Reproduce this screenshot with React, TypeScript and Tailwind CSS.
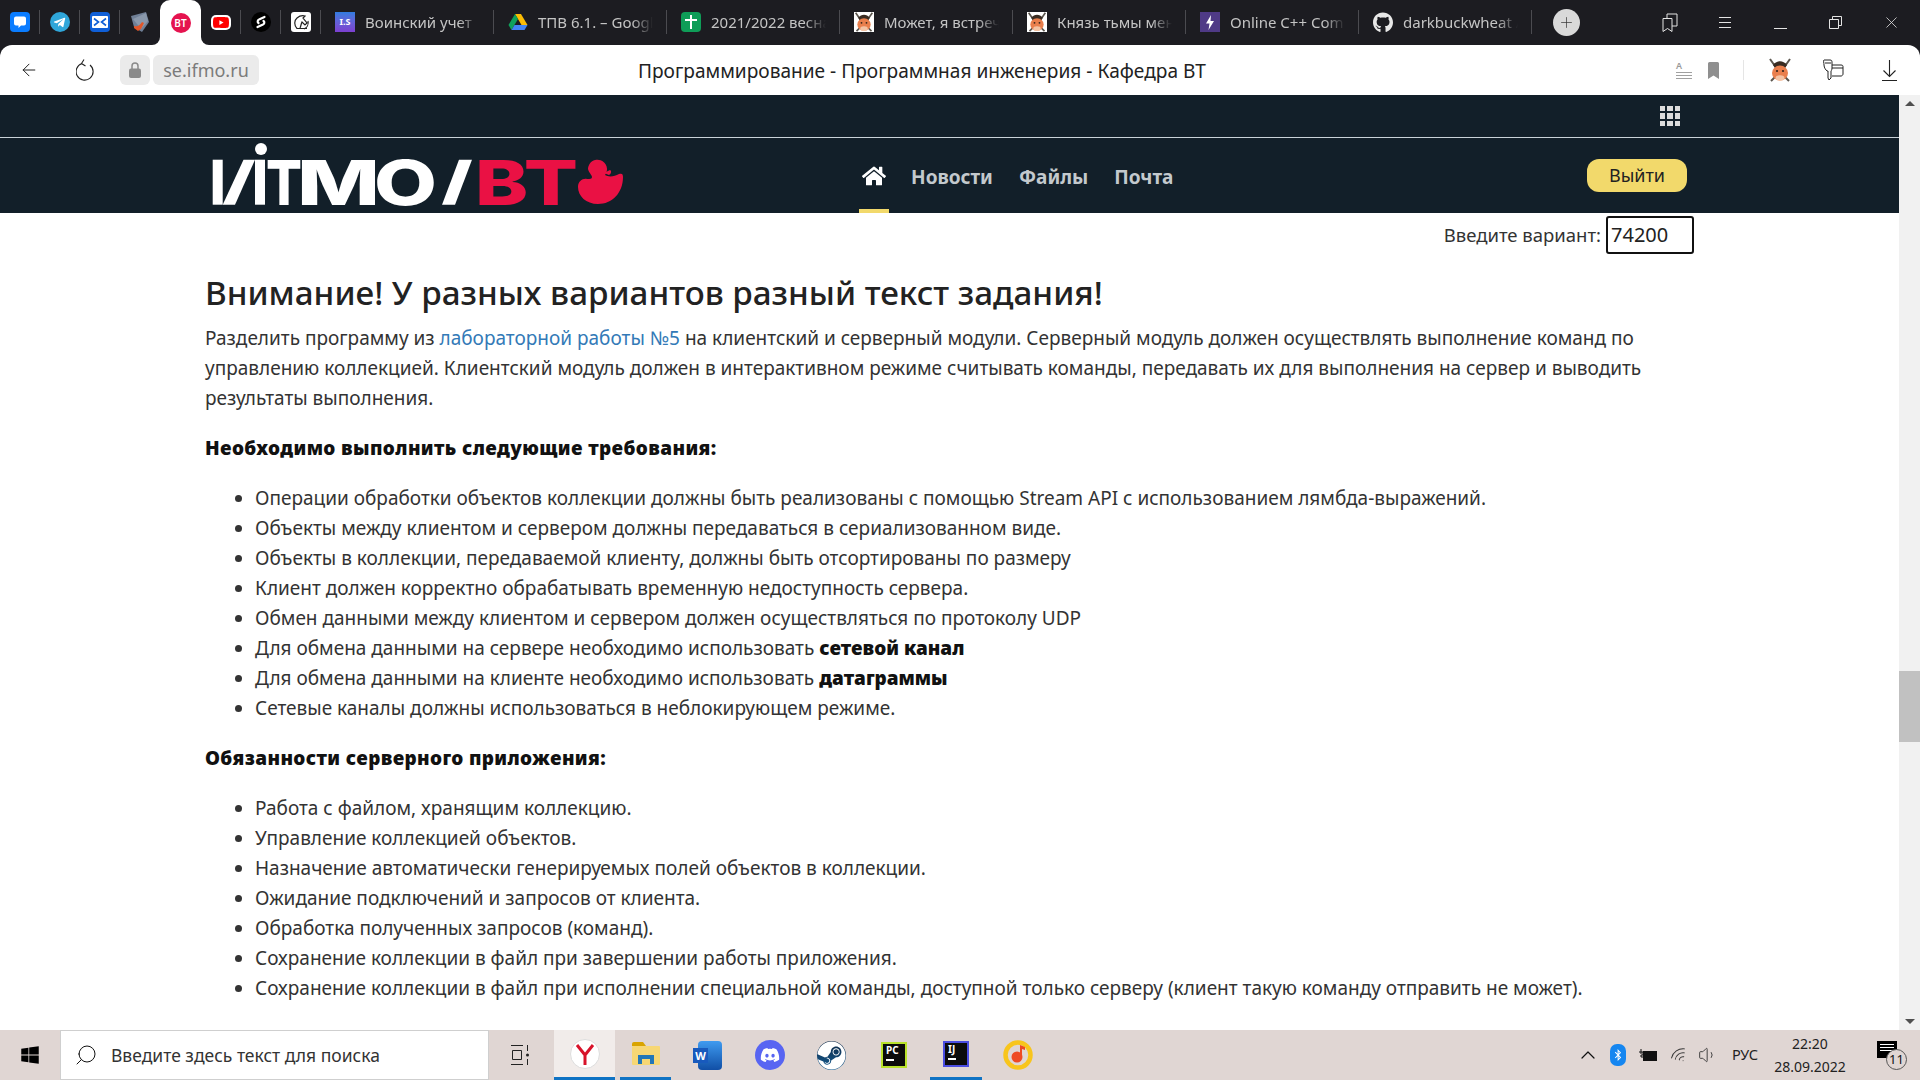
import React from "react";
import { FaGithub, FaDiscord, FaSteam, FaHome, FaYoutube, FaTelegramPlane, FaWindows, FaBluetoothB } from "react-icons/fa";
import { ArrowLeft, Search, Plus, X, ChevronUp, Volume1, Wifi } from "lucide-react";

function Sep() {
  return <div className="h-[24px] w-px bg-[#4b4b50] shrink-0" />;
}

function Pirate({ s = 20 }: { s?: number }) {
  return (
    <svg width={s} height={s} viewBox="0 0 24 24" className="shrink-0">
      <path d="M2 1l7 10M22 1l-7 10M3 23l6-6M21 23l-6-6" stroke="#5c574f" strokeWidth="2" fill="none" />
      <path d="M5 7c4-5 10-5 14 0l-2 3H7z" fill="#3a2c22" />
      <ellipse cx="12" cy="15" rx="8" ry="7.500" fill="#e97f4d" />
      <ellipse cx="12" cy="20" rx="4.500" ry="2.800" fill="#f3c3a4" />
      <circle cx="9" cy="13" r="1.100" fill="#33231a" />
      <circle cx="15" cy="13" r="1.100" fill="#33231a" />
    </svg>
  );
}

function PinnedIcon({ id }: { id: string }) {
  if (id === "chat")
    return (
      <div className="w-5 h-5 rounded bg-[#0a7cff] flex items-center justify-center">
        <svg width="14" height="14" viewBox="0 0 14 14"><path d="M3 1.500h8a2 2 0 0 1 2 2v5a2 2 0 0 1-2 2H8l-2.500 2.500V10.500H3a2 2 0 0 1-2-2v-5a2 2 0 0 1 2-2z" fill="#fff" /></svg>
      </div>
    );
  if (id === "tg")
    return (
      <div className="w-5 h-5 rounded-full bg-[#2fa6da] flex items-center justify-center">
        <FaTelegramPlane className="text-white text-[13px]" />
      </div>
    );
  if (id === "mail")
    return (
      <div className="w-5 h-5 rounded-sm bg-[#0f5fd7] flex items-center justify-center">
        <svg width="16" height="12" viewBox="0 0 16 12"><rect width="16" height="12" rx="1" fill="#fff" /><path d="M2 2.500l4.500 3.500L2 9.500M14 2.500L9.500 6l4.500 3.500" stroke="#0f5fd7" strokeWidth="1.600" fill="none" /></svg>
      </div>
    );
  if (id === "shield")
    return (
      <svg width="20" height="22" viewBox="0 0 20 22">
        <path d="M1 5l15-4 3 10-7 10-8-5z" fill="#6f7f96" />
        <path d="M3 8l13-6 2 8-7 8z" fill="#8a98ab" />
        <path d="M4 15c4 1 6-1 8-4l2 1-3 6-3 2-4-3z" fill="#e2562a" />
      </svg>
    );
  if (id === "vt")
    return (
      <div className="w-5 h-5 rounded-full bg-[#e5134f] flex items-center justify-center text-white text-[10px] font-semibold">BT</div>
    );
  if (id === "yt") return <FaYoutube className="text-[#f00] bg-white rounded-[5px] h-[15px] w-[20px]" />;
  if (id === "s")
    return (
      <div className="w-5 h-5 rounded-full bg-black flex items-center justify-center">
        <svg width="14" height="14" viewBox="0 0 14 14"><path d="M10.500 2L5 4.500a2 2 0 0 0-.5 3.500M3.500 12L9 9.500A2 2 0 0 0 9.500 6" stroke="#fff" strokeWidth="2.200" fill="none" strokeLinecap="round" /></svg>
      </div>
    );
  if (id === "knight")
    return (
      <div className="w-5 h-5 rounded-[3px] bg-white flex items-center justify-center">
        <svg width="18" height="18" viewBox="0 0 18 18"><path d="M15 15.500H5c-3-3-3-8 0-10.500 3-2.500 6-2.500 8-2l-2 2 4 5-2 2-3-3c-1 2-1 4-2 6M12 16a7 7 0 0 0 4-8" stroke="#222" strokeWidth="1.200" fill="none" /></svg>
      </div>
    );
  if (id === "is")
    return (
      <div className="w-5 h-5 bg-gradient-to-b from-[#2f7ce0] to-[#7c3fd0] flex items-center justify-center text-white text-[9px] font-bold">I.S</div>
    );
  if (id === "drive")
    return (
      <svg width="20" height="18" viewBox="0 0 20 18">
        <path d="M7 1h6l6.500 11h-6z" fill="#fbbc04" />
        <path d="M7 1L.5 12l3 5L10 6z" fill="#0fa25c" />
        <path d="M3.500 17h13l3-5H6.500z" fill="#4285f4" />
      </svg>
    );
  if (id === "sheet")
    return (
      <div className="w-5 h-5 rounded-sm bg-[#0f9d58] flex items-center justify-center">
        <svg width="12" height="14" viewBox="0 0 12 14"><path d="M6 0v14M0 5h12" stroke="#fff" strokeWidth="2" /></svg>
      </div>
    );
  if (id === "pirate") return <div className="w-5 h-5 bg-white"><Pirate /></div>;
  if (id === "bolt")
    return (
      <div className="w-5 h-5 bg-[#4f3a86] flex items-center justify-center">
        <svg width="10" height="15" viewBox="0 0 10 15"><path d="M6 0L1 8.500h3.500L3.500 15 9 6H5.500z" fill="#fff" /></svg>
      </div>
    );
  if (id === "gh") return <FaGithub className="text-[#e8e8e8] text-[21px]" />;
  return null;
}

const pinnedLeft = ["chat", "tg", "mail", "shield"];
const pinnedRight = ["yt", "s", "knight"];
const tabs = [
  ["is", "Воинский учет"],
  ["drive", "ТПВ 6.1. – Google Диск"],
  ["sheet", "2021/2022 весна"],
  ["pirate", "Может, я встречу"],
  ["pirate", "Князь тьмы меня"],
  ["bolt", "Online C++ Compiler"],
  ["gh", "darkbuckwheat / lab"],
];

function TabBar() {
  return (
    <div className="h-[45px] bg-[#1c1c21] flex items-center shrink-0 pb-px">
      {pinnedLeft.map((id) => (
        <div key={id} className="w-[40px] h-full flex items-center justify-end">
          <div className="flex-1 flex justify-center"><PinnedIcon id={id} /></div>
          {id !== "shield" && <Sep />}
        </div>
      ))}
      <div className="relative w-[41px] h-[46px] bg-white rounded-t-[10px] flex items-center justify-center self-start">
        <PinnedIcon id="vt" />
        <div className="absolute bottom-px -left-2 w-2 h-2 bg-white"><div className="w-full h-full bg-[#1c1c21] rounded-br-[8px]" /></div>
        <div className="absolute bottom-px -right-2 w-2 h-2 bg-white"><div className="w-full h-full bg-[#1c1c21] rounded-bl-[8px]" /></div>
      </div>
      {pinnedRight.map((id) => (
        <div key={id} className="w-[40px] h-full flex items-center justify-end">
          <div className="flex-1 flex justify-center"><PinnedIcon id={id} /></div>
          <Sep />
        </div>
      ))}
      {tabs.map(([id, label], i) => (
        <div key={i} className="w-[173px] h-full flex items-center">
          <div className="w-[14px] shrink-0" />
          <div className="w-[20px] flex justify-center shrink-0"><PinnedIcon id={id} /></div>
          <div className="ml-[10px] w-[115px] overflow-hidden whitespace-nowrap text-[15px] text-[#c4c4c4] [mask-image:linear-gradient(to_right,black_82%,transparent)]">{label}</div>
          <div className="flex-1" />
          <Sep />
        </div>
      ))}
      <div className="ml-[21px] w-[27px] h-[27px] rounded-full bg-[#d9d9d9] flex items-center justify-center text-[#333]">
        <Plus size={17} strokeWidth={1} />
      </div>
      <div className="ml-[82px] w-[16px] flex justify-center">
        <svg width="16" height="19" viewBox="0 0 16 19" fill="none" stroke="#e4e4e4" strokeWidth="1"><path d="M1 5.500h9v13l-4.500-3-4.500 3zM5 5V1h10v12h-5" /></svg>
      </div>
      <div className="ml-[41px] w-[12px] flex flex-col gap-[4px]">
        <div className="h-px bg-[#e4e4e4]" /><div className="h-px bg-[#e4e4e4]" /><div className="h-px bg-[#e4e4e4]" />
      </div>
      <div className="ml-[43px] w-[13px] h-px bg-[#e4e4e4] mt-[12px]" />
      <div className="ml-[42px] w-[13px]">
        <svg width="13" height="13" viewBox="0 0 13 13" fill="none" stroke="#e4e4e4"><path d="M.5 3.500h9v9h-9zM3.500 3.500v-3h9v9h-3" /></svg>
      </div>
      <div className="ml-[40px] text-[#e4e4e4]"><X size={19} strokeWidth={1} /></div>
    </div>
  );
}

function Toolbar() {
  return (
    <div className="h-[50px] bg-[#1c1c21] shrink-0">
      <div className="h-full bg-white rounded-t-[12px] flex items-center text-[#222]">
        <div className="ml-[19px]"><ArrowLeft size={20} strokeWidth={1.200} /></div>
        <div className="ml-[37px]">
          <svg width="19" height="22" viewBox="0 0 19 22" fill="none" stroke="#222" strokeWidth="1.100"><path d="M6 4.500a8.500 8.500 0 1 0 8 1.500M8 .5l-2.500 4 4 2.500" /></svg>
        </div>
        <div className="ml-[25px] w-[30px] h-[30px] rounded-[6px] bg-[#ebebeb] flex items-center justify-center">
          <svg width="12" height="16" viewBox="0 0 12 16"><path d="M3 7V4a3 3 0 0 1 6 0v3" stroke="#8a8a8a" strokeWidth="1.500" fill="none" /><rect y="6.500" width="12" height="9.500" rx="2" fill="#8a8a8a" /></svg>
        </div>
        <div className="ml-[3px] w-[106px] h-[30px] rounded-[6px] bg-[#ebebeb] flex items-center justify-center text-[#7b7b7b] text-[18px] leading-none">se.ifmo.ru</div>
        <div className="ml-[378px] w-[570px] text-center text-[19.100px] text-[#222] whitespace-nowrap pt-[2px]">Программирование - Программная инженерия - Кафедра ВТ</div>
        <div className="ml-[469px] w-[16px] flex flex-col gap-[2px]">
          <div className="text-[9px] leading-[8px] text-[#9a9a9a] font-semibold">A</div>
          <div className="h-px bg-[#a0a0a0]" /><div className="h-px bg-[#a0a0a0]" /><div className="h-px bg-[#a0a0a0]" />
        </div>
        <div className="ml-[16px]">
          <svg width="11" height="17" viewBox="0 0 11 17"><path d="M0 1.500A1.500 1.500 0 0 1 1.500 0h8A1.500 1.500 0 0 1 11 1.500V17l-5.500-3.500L0 17z" fill="#8f8f8f" /></svg>
        </div>
        <div className="ml-[24px] w-px h-[20px] bg-[#e5e5e5]" />
        <div className="ml-[24px]"><Pirate s={24} /></div>
        <div className="ml-[30px]">
          <svg width="22" height="22" viewBox="0 0 22 22" fill="none" stroke="#222" strokeWidth="1"><path d="M2 1h6c2 0 2 1 2 3v5c0 2-1 3-1 3v7l-2 2-1-2V12H5c-1-1-3-3-3-6 0-2-1-5 0-5zM3 4h6M10 6h9c2 0 2 1 2 2v7c0 1-1 2-2 2H10M10 9h11" /></svg>
        </div>
        <div className="ml-[38px]">
          <svg width="15" height="21" viewBox="0 0 15 21" fill="none" stroke="#222" strokeWidth="1.100"><path d="M7.500 0v16M1.500 10.500l6 6 6-6M0 20.500h15" /></svg>
        </div>
      </div>
    </div>
  );
}

function Logo() {
  return (
    <svg width="440" height="75" viewBox="0 0 440 75" className="shrink-0 ml-[200px]">
      <rect x="12.700" y="21.700" width="10" height="45" fill="#fff" />
      <polygon points="22.700,66.700 35,66.700 55,21.700 43.500,21.700" fill="#fff" />
      <rect x="55" y="21.700" width="10" height="45" fill="#fff" />
      <circle cx="61" cy="11" r="6" fill="#fff" />
      <g fontFamily="Inter, sans-serif" fontWeight="800" fontSize="62" fill="#fff">
        <text x="66" y="66.700" textLength="36" lengthAdjust="spacingAndGlyphs">Т</text>
        <text x="97" y="66.700" textLength="83" lengthAdjust="spacingAndGlyphs">М</text>
        <text x="174" y="66.700" textLength="63" lengthAdjust="spacingAndGlyphs">О</text>
        <text x="275" y="66.700" textLength="103" lengthAdjust="spacingAndGlyphs" fill="#ea1144">ВТ</text>
      </g>
      <polygon points="242,66.700 255,66.700 272,21.700 259,21.700" fill="#fff" />
      <path d="M388 31a9.500 9.500 0 1 1 17 6c3 2 9 2 14-1 3-1 4 0 4 3 0 16-11 27-25 27-12 0-20-8-20-17 0-6 5-9 9-8 3 0 5 0 5-2 0-2-3-4-4-8z" fill="#ea1144" />
      <path d="M404 35l6-3c2 1 1 4-1 5z" fill="#ea1144" />
    </svg>
  );
}

function Nav() {
  return (
    <div className="shrink-0 bg-[#121f29]">
      <div className="h-[42px] flex items-center justify-end pr-[219px]">
        <div className="grid grid-cols-3 gap-[2px]">
          {Array.from({ length: 9 }).map((_, i) => (
            <div key={i} className="w-[5.500px] h-[5.500px] bg-[#dcdcdc]" />
          ))}
        </div>
      </div>
      <div className="h-px bg-[#c9d2d8]" />
      <div className="h-[75px] flex">
        <Logo />
        <div className="ml-[219px] w-[30px] relative flex justify-center pt-[26px] text-white text-[24px]">
          <FaHome />
          <div className="absolute bottom-0 left-0 right-0 h-[4px] bg-[#f2d96b]" />
        </div>
        <div className="ml-[22px] flex items-center h-[78px] gap-[26px] text-[19px] font-bold text-[#c3c9cd] whitespace-nowrap">
          <span>Новости</span>
          <span>Файлы</span>
          <span>Почта</span>
        </div>
        <div className="flex-1" />
        <div className="mr-[212px] mt-[21px] w-[100px] h-[33px] rounded-[12px] bg-[#f2d96b] flex items-center justify-center text-[18px] text-[#222]">Выйти</div>
      </div>
    </div>
  );
}

const list1: React.ReactNode[] = [
  "Операции обработки объектов коллекции должны быть реализованы с помощью Stream API с использованием лямбда-выражений.",
  "Объекты между клиентом и сервером должны передаваться в сериализованном виде.",
  "Объекты в коллекции, передаваемой клиенту, должны быть отсортированы по размеру",
  "Клиент должен корректно обрабатывать временную недоступность сервера.",
  "Обмен данными между клиентом и сервером должен осуществляться по протоколу UDP",
  <>Для обмена данными на сервере необходимо использовать <b className="font-black text-[#111]">сетевой канал</b></>,
  <>Для обмена данными на клиенте необходимо использовать <b className="font-black text-[#111]">датаграммы</b></>,
  "Сетевые каналы должны использоваться в неблокирующем режиме.",
];
const list2 = [
  "Работа с файлом, хранящим коллекцию.",
  "Управление коллекцией объектов.",
  "Назначение автоматически генерируемых полей объектов в коллекции.",
  "Ожидание подключений и запросов от клиента.",
  "Обработка полученных запросов (команд).",
  "Сохранение коллекции в файл при завершении работы приложения.",
  "Сохранение коллекции в файл при исполнении специальной команды, доступной только серверу (клиент такую команду отправить не может).",
];

function Bullets({ items }: { items: React.ReactNode[] }) {
  return (
    <ul className="list-disc pl-[50px] mt-[20px]">
      {items.map((t, i) => (
        <li key={i} className="h-[30px] whitespace-nowrap">{t}</li>
      ))}
    </ul>
  );
}

function Content() {
  return (
    <div className="flex-1 overflow-hidden pl-[205px] pr-[205px] text-[19px] leading-[30px] text-[#333]">
      <div className="flex justify-end items-center h-[38px] mt-[3px]">
        <span className="text-[18.500px] text-[#333]">Введите вариант:</span>
        <div className="ml-[5px] w-[88px] h-[38px] border-2 border-[#111] rounded-[3px] flex items-center pl-[3px] text-[20px] text-[#222]">74200</div>
      </div>
      <h2 className="mt-[17px] text-[33.200px] leading-[44px] font-medium text-[#222] whitespace-nowrap">Внимание! У разных вариантов разный текст задания!</h2>
      <p className="mt-[8px]">
        Разделить программу из <a className="text-[#337ab7]">лабораторной работы №5</a> на клиентский и серверный модули. Серверный модуль должен осуществлять выполнение команд по управлению коллекцией. Клиентский модуль должен в интерактивном режиме считывать команды, передавать их для выполнения на сервер и выводить результаты выполнения.
      </p>
      <p className="mt-[20px] font-black text-[#111] tracking-[0.38px]">Необходимо выполнить следующие требования:</p>
      <Bullets items={list1} />
      <p className="mt-[20px] font-black text-[#111] tracking-[0.38px]">Обязанности серверного приложения:</p>
      <Bullets items={list2} />
    </div>
  );
}

function Scrollbar() {
  return (
    <div className="w-[21px] shrink-0 bg-[#f1f1f1] flex flex-col items-center">
      <div className="h-[17px] flex items-center"><div className="w-0 h-0 border-x-[5px] border-x-transparent border-b-[5px] border-b-[#505050]" /></div>
      <div className="h-[559px]" />
      <div className="w-full h-[71px] bg-[#c1c1c1]" />
      <div className="flex-1" />
      <div className="h-[17px] flex items-center"><div className="w-0 h-0 border-x-[5px] border-x-transparent border-t-[5px] border-t-[#505050]" /></div>
    </div>
  );
}

function Taskbar() {
  return (
    <div className="h-[50px] bg-[#e0d6d3] flex items-center shrink-0">
      <div className="w-[60px] flex justify-center"><FaWindows className="text-black text-[20px]" /></div>
      <div className="w-[429px] h-full bg-white border border-[#cfcfcf] flex items-center">
        <Search size={24} strokeWidth={1} className="ml-[13px] text-[#111] -scale-x-100" />
        <span className="ml-[13px] text-[17.500px] text-[#333] whitespace-nowrap">Введите здесь текст для поиска</span>
      </div>
      <div className="ml-[21px] w-[20px]">
        <svg width="20" height="20" viewBox="0 0 20 20" fill="none" stroke="#222"><path d="M1 .5h12M1 19.500h12M2.500 5.500h9v9h-9zM17.500 0v6M17.500 14v6" /><circle cx="17.500" cy="10" r="1.500" fill="#222" stroke="none" /></svg>
      </div>
      <div className="ml-[24px] w-[61px] h-full bg-[#f1ecea] border-b-[3px] border-[#0f73c4] flex items-center justify-center">
        <div className="w-[30px] h-[30px] rounded-full bg-white border border-[#dddddd] flex items-center justify-center">
          <svg width="20" height="22" viewBox="0 0 20 22" fill="none" stroke="#d8132a" strokeWidth="3"><path d="M2 2l8 10 8-10M10 12v10" /></svg>
        </div>
      </div>
      <div className="ml-[5px] w-[51px] h-full border-b-[3px] border-[#0f73c4] flex items-center justify-center">
        <svg width="28" height="23" viewBox="0 0 28 23"><path d="M0 2a2 2 0 0 1 2-2h9l3 4H0z" fill="#d9a400" /><rect y="4" width="28" height="19" rx="1" fill="#f7d774" /><path d="M6 22v-9h16v9h-4v-5h-8v5z" fill="#2377b8" /></svg>
      </div>
      <div className="ml-[22px] w-[29px] relative h-[29px]">
        <div className="absolute inset-0 left-[5px] rounded-sm bg-gradient-to-b from-[#3f9bf0] to-[#114fa6]" />
        <div className="absolute left-0 top-[7px] w-[15px] h-[15px] bg-[#185abd] text-white text-[11px] font-bold leading-[15px] text-center">W</div>
      </div>
      <div className="ml-[33px] w-[30px] h-[30px] rounded-full bg-[#5865f2] flex items-center justify-center"><FaDiscord className="text-white text-[20px]" /></div>
      <div className="ml-[32px] w-[29px] h-[29px] rounded-full bg-gradient-to-b from-[#0d2744] to-[#145f95] flex items-center justify-center"><FaSteam className="text-white text-[29px]" /></div>
      <div className="ml-[35px] w-[26px] h-[26px] bg-[#0b0b0b] border-2 border-[#b9e22c] flex flex-col px-[3px] text-white text-[10px] font-bold leading-[13px]">
        PC<div className="w-[8px] h-[2px] bg-white mt-[2px]" />
      </div>
      <div className="ml-[23px] w-[52px] h-full border-b-[3px] border-[#0f73c4] flex items-center justify-center">
        <div className="w-[26px] h-[26px] bg-[#0b0b0b] border-2 border-[#4a4de0] flex flex-col px-[3px] text-white text-[10px] font-bold leading-[13px]">
          IJ<div className="w-[8px] h-[2px] bg-white mt-[2px]" />
        </div>
      </div>
      <div className="ml-[21px] w-[30px] h-[30px]">
        <svg width="30" height="30" viewBox="0 0 30 30"><circle cx="15" cy="15" r="12.500" fill="none" stroke="#f8c51c" strokeWidth="4.500" /><circle cx="14" cy="17" r="5.500" fill="#ee4a23" /><path d="M17 17V5l5 2v3l-3-1v8z" fill="#ee4a23" /></svg>
      </div>
      <div className="flex-1" />
      <ChevronUp size={24} strokeWidth={1.200} className="text-[#111] mr-[10px]" />
      <div className="w-[16px] h-[22px] rounded-[7px] bg-[#1586f0] flex items-center justify-center text-white text-[12px]"><FaBluetoothB /></div>
      <div className="ml-[12px]">
        <svg width="20" height="13" viewBox="0 0 20 13"><rect x="5" y="2" width="14" height="10" fill="#111" /><path d="M3 0v5M1 3h4v3h-2v2h2" stroke="#111" fill="none" /></svg>
      </div>
      <Wifi size={19} strokeWidth={1.200} className="ml-[12px] text-[#333] rotate-[-35deg]" />
      <Volume1 size={20} strokeWidth={1.100} className="ml-[9px] text-[#333]" />
      <span className="ml-[14px] text-[14.500px] text-[#222] whitespace-nowrap">РУС</span>
      <div className="ml-[16px] w-[72px] flex flex-col items-center text-[14px] leading-[23px] text-[#222]">
        <span>22:20</span>
        <span>28.09.2022</span>
      </div>
      <div className="ml-[31px] relative w-[22px] h-[30px]">
        <div className="absolute top-[1px] left-0 w-[20px] h-[17px] bg-black flex flex-col gap-[2px] px-[3px] py-[3px]">
          <div className="h-px bg-white" /><div className="h-px bg-white" /><div className="h-px bg-white" />
        </div>
        <div className="absolute top-[9px] left-[9px] w-[21px] h-[21px] rounded-full bg-[#e0d6d3] border border-[#555] flex items-center justify-center text-[13px] text-[#111]">11</div>
      </div>
      <div className="w-[21px]" />
    </div>
  );
}

export default function App() {
  return (
    <div className="w-[1920px] h-[1080px] flex flex-col overflow-hidden bg-white [font-family:'Noto_Sans',sans-serif]">
      <TabBar />
      <Toolbar />
      <div className="flex-1 flex min-h-0">
        <div className="flex-1 flex flex-col min-w-0">
          <Nav />
          <Content />
        </div>
        <Scrollbar />
      </div>
      <Taskbar />
    </div>
  );
}
